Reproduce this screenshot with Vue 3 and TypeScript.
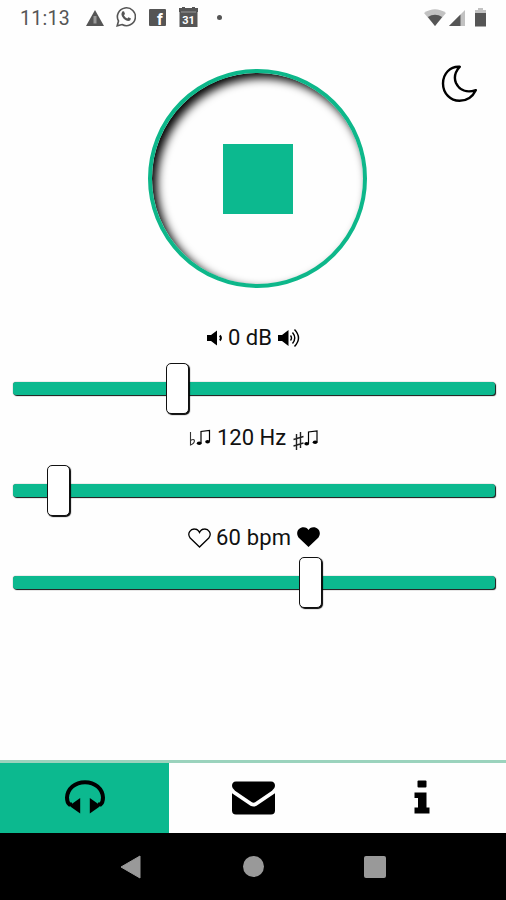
<script setup lang="ts">
import { ref } from 'vue'

interface Slider {
  id: string
  label: string
  position: number
}

const sliders = ref<Slider[]>([
  { id: 'volume', label: '0 dB', position: 153 },
  { id: 'pitch', label: '120 Hz', position: 34 },
  { id: 'tempo', label: '60 bpm', position: 286 },
])
</script>

<template>
  <div class="screen">
    <header class="status">
      <span class="time">11:13</span>
      <svg class="warn" width="18" height="16" viewBox="0 0 18 16">
        <path d="M9 0 18 16H0Z" fill="#555" />
        <path d="M9 6v7.500" stroke="#999" stroke-width="3" />
      </svg>
      <svg class="chat" width="20" height="21" viewBox="0 0 20 21">
        <path d="M1.200 19.800 2.500 15A9 8.900 0 1 1 6 18.500Z" fill="none" stroke="#555" stroke-width="1.600" />
        <path d="M6.200 5.500 8 5.200 9 8 7.900 9.300Q9 11.500 11.300 12.500L12.500 11.200 15 12.500Q14.500 15 12.300 15C9 14.500 5.700 11.500 5.400 8Z" fill="#555" />
      </svg>
      <svg class="social" width="17" height="17" viewBox="0 0 17 17">
        <rect width="17" height="17" rx="1" fill="#555" />
        <text x="8" y="15.800" class="f-mark">f</text>
      </svg>
      <svg class="calendar" width="19" height="20" viewBox="0 0 19 20">
        <path d="M0 1H3V0H6V1H13V0H16V1H19V5H18.500V20H.5V5H0Z" fill="#555" />
        <path d="M2 5H17" stroke="#aaa" stroke-width=".8" />
        <text x="9.500" y="16.500" class="day">31</text>
      </svg>
      <i class="more"></i>
      <svg class="wifi" width="22" height="17" viewBox="0 0 22 17">
        <path d="M0 4Q11-3.500 22 4L11 17Z" fill="#c2c2c2" />
        <path d="M3.800 8Q11 3.500 18.200 8L11 17Z" fill="#555" />
      </svg>
      <svg class="signal" width="16" height="16" viewBox="0 0 16 16">
        <path d="M16 0V16H0Z" fill="#c2c2c2" />
        <path d="M11.500 4.500V16H0Z" fill="#555" />
      </svg>
      <svg class="battery" width="11" height="19" viewBox="0 0 11 19">
        <path d="M3 0H8V2H11V6H0V2H3Z" fill="#c2c2c2" />
        <path d="M0 5H11V18.500H0Z" fill="#555" />
      </svg>
    </header>

    <section class="player">
      <button class="play" type="button"><span class="stop"></span></button>
      <button class="theme" type="button">
        <svg width="37" height="38" viewBox="0 0 37 38">
          <path d="M18.800 1.800C9 1 2 9 2 18.500C2 28.500 9.500 35.800 18.500 35.800C26 35.800 31.500 32 34.800 25.200C26 28 18.500 25.500 15 18C12.500 12 14.500 6.500 18.800 1.800Z" fill="none" stroke="#000" stroke-width="2.400" stroke-linejoin="round" />
        </svg>
      </button>
    </section>

    <main class="controls">
      <div v-for="s in sliders" :key="s.id" class="control" :class="s.id">
        <div class="caption">
          <svg v-if="s.id === 'volume'" class="low" width="16" height="16" viewBox="0 0 16 16">
            <path d="M0 5H4L10 .5V15.500L4 11H0Z" />
            <path d="M12.800 5.500Q15 8 12.800 10.500" fill="none" stroke="#000" stroke-width="2" />
          </svg>
          <svg v-else-if="s.id === 'pitch'" class="low" width="22" height="18" viewBox="0 0 22 18">
            <path d="M1.500 3V16C7 13.500 6.500 8.500 1.500 11.500" fill="none" stroke="#333" stroke-width="1.100" />
            <path d="M12 14V2.500L20.500 1.500V12.500" fill="none" stroke="#000" stroke-width="1.200" />
            <ellipse cx="10.200" cy="14.300" rx="2.400" ry="1.800" /><ellipse cx="18.600" cy="12.800" rx="2.400" ry="1.800" />
          </svg>
          <svg v-else class="low" width="23" height="20" viewBox="0 0 23 20">
            <path d="M11.500 19 2.200 10C-1.500 5 3 .8 6.500 1C9 1 10.700 2.800 11.500 4.500C12.300 2.800 14 1 16.500 1C20 .8 24.500 5 20.800 10Z" fill="none" stroke="#000" stroke-width="1.300" />
          </svg>
          <span class="value">{{ s.label }}</span>
          <svg v-if="s.id === 'volume'" class="high" width="23" height="20" viewBox="0 0 23 20">
            <path d="M0 7H4L10.500 2V18L4 13H0Z" />
            <g fill="none" stroke="#000" stroke-width="1.400">
              <path d="M12.500 7.500Q14.500 10 12.500 12.500M14.500 4.500Q19 10 14.500 15.500M16.500 1.500Q24.500 10 16.500 18.500" />
            </g>
          </svg>
          <svg v-else-if="s.id === 'pitch'" class="high" width="25" height="22" viewBox="0 0 25 22">
            <path d="M3.500 4V20M7.500 2V18M.5 9.500 10.500 6.500M.5 16 10.500 13" fill="none" stroke="#222" stroke-width="1.400" />
            <path d="M15.500 13.500V2L24 1V12" fill="none" stroke="#000" stroke-width="1.200" />
            <ellipse cx="13.700" cy="13.800" rx="2.400" ry="1.800" /><ellipse cx="22.100" cy="12.300" rx="2.400" ry="1.800" />
          </svg>
          <svg v-else class="high" width="23" height="20" viewBox="0 0 23 20">
            <path d="M11.500 20 1.500 10.500C-2 5 2 .3 6.500.3C9 .3 10.700 1.500 11.500 3C12.300 1.500 14 .3 16.500.3C21 .3 25 5 21.500 10.500Z" />
          </svg>
        </div>
        <div class="track">
          <span class="thumb" :style="{ marginLeft: s.position + 'px' }"></span>
        </div>
      </div>
    </main>

    <nav class="tabs">
      <button class="tab active" type="button">
        <svg class="headphones" width="40" height="34" viewBox="0 0 40 34">
          <path d="M7 24.500H4.500C2 22.500 2 19.500 2 17.500C2.500 8.500 10 2.200 20 2.200S37.500 8.500 38 17.500C38 19.500 38 22.500 35.500 24.500H33" fill="none" stroke="#000" stroke-width="4" />
          <path d="M15.200 18V33.500L6 27V24.500ZM24.800 18V33.500L34 27V24.500Z" />
        </svg>
      </button>
      <button class="tab" type="button">
        <svg width="43" height="34" viewBox="0 0 43 34">
          <path d="M4 .5H39Q43 .5 43 5Q43 7.500 40 9.700L23.500 21Q21.500 22.300 19.500 21L3 9.700Q0 7.500 0 5Q0 .5 4 .5Z" />
          <path d="M0 12.200 18.500 24.700Q21.500 26.200 24.500 24.700L43 12.200V29.500Q43 33.500 39 33.500H4Q0 33.500 0 29.500Z" />
        </svg>
      </button>
      <button class="tab info" type="button">
        <svg width="16" height="34" viewBox="0 0 16 34">
          <rect x="3.500" y="0.500" width="9" height="7" rx="1" />
          <path d="M.5 12.500H12.500V27.500H15.500V33.500H.5V27.500H4V18H.5Z" />
        </svg>
      </button>
    </nav>

    <footer class="system">
      <svg width="21" height="24" viewBox="0 0 21 24"><path d="M20 1V23L1 12Z" fill="#999" stroke="#999" stroke-linejoin="round" /></svg>
      <i class="home"></i>
      <i class="recent"></i>
    </footer>
  </div>
</template>

<style>
body {
  background: #fefefe;
}
</style>

<style scoped>
.screen {
  width: 506px;
  height: 900px;
  display: flex;
  flex-direction: column;
  overflow: hidden;
  background: #fefefe;
  font-family: Roboto, "Liberation Sans", sans-serif;
  color: #111;
}
svg {
  display: block;
  flex: none;
}
button {
  border: 0;
  padding: 0;
  background: none;
}
.status {
  height: 36px;
  padding: 0 20px 0 20px;
  display: flex;
  align-items: center;
  box-sizing: border-box;
}
.time {
  width: 66px;
  font-size: 19.5px;
  letter-spacing: 0.3px;
  color: #555;
}
.chat { margin-left: 12px; margin-top: -3px; }
.social { margin-left: 13px; margin-top: -1px; }
.calendar { margin-left: 13px; margin-top: -2px; }
.f-mark {
  font: bold 16px Roboto, sans-serif;
  fill: #fff;
}
.day {
  font: bold 11px Roboto, sans-serif;
  fill: #fff;
  text-anchor: middle;
}
.more {
  width: 5px;
  height: 5px;
  margin-left: 19px;
  margin-top: -1px;
  border-radius: 50%;
  background: #555;
}
.wifi { margin-left: auto; margin-top: -1px; }
.signal { margin-left: 3px; margin-top: -1px; }
.battery { margin-left: 10px; margin-top: -1px; }
.player {
  height: 286px;
  padding: 33px 28px 0 148px;
  display: flex;
  align-items: flex-start;
  justify-content: space-between;
  box-sizing: border-box;
}
.play {
  width: 219px;
  height: 219px;
  display: grid;
  place-items: center;
  box-sizing: border-box;
  border: 4px solid #0db78a;
  border-radius: 50%;
  box-shadow: inset 5px 5px 10px #000;
}
.stop {
  width: 70px;
  height: 70px;
  background: #0cb98f;
}
.theme {
  margin-top: -4px;
}
.controls {
  flex: 1;
  padding: 0 11px 0 13px;
}
.caption {
  height: 30px;
  display: flex;
  align-items: center;
}
.value {
  font-size: 22px;
  line-height: 30px;
  white-space: nowrap;
}
.tempo .value { letter-spacing: 0.15px; }
.volume .caption { position: relative; top: 1px; }
.volume .low { margin-left: 194px; margin-right: 5px; }
.volume .high { margin-left: 6px; }
.pitch .low { margin-left: 176px; margin-right: 6px; }
.pitch .high { margin-left: 7px; margin-top: 5px; }
.tempo .low { margin-left: 175px; margin-right: 5px; }
.tempo .high { margin-left: 6px; margin-top: -2px; }
.track {
  width: 482px;
  height: 13px;
  display: flex;
  align-items: center;
  border-radius: 3px;
  background: #0cb98f;
  box-shadow: 1px 1px 1px #111, 0 0 1px #555;
}
.volume .track { margin-top: 30px; }
.pitch { margin-top: 28px; }
.pitch .track { margin-top: 31px; }
.tempo { margin-top: 26px; }
.tempo .track { margin-top: 23px; }
.thumb {
  width: 23px;
  height: 51px;
  flex: none;
  box-sizing: border-box;
  border: 1px solid #111;
  border-radius: 5px;
  background: #fff;
  box-shadow: 1px 1px 1px #000;
}
.tabs {
  height: 73px;
  display: flex;
  box-sizing: border-box;
  border-top: 3px solid #9bd3bd;
}
.tab {
  flex: 1;
  display: grid;
  place-items: center;
}
.headphones { margin: -3px 0 0 1px; }
.info svg { margin-top: -3px; }
.active {
  background: #0cb98f;
}
.system {
  height: 67px;
  padding-left: 120px;
  display: flex;
  align-items: center;
  background: #000;
}
.home {
  width: 21px;
  height: 21px;
  margin-left: 102px;
  border-radius: 50%;
  background: #999;
}
.recent {
  width: 22px;
  height: 22px;
  margin-left: 100px;
  border-radius: 2px;
  background: #999;
}
</style>
